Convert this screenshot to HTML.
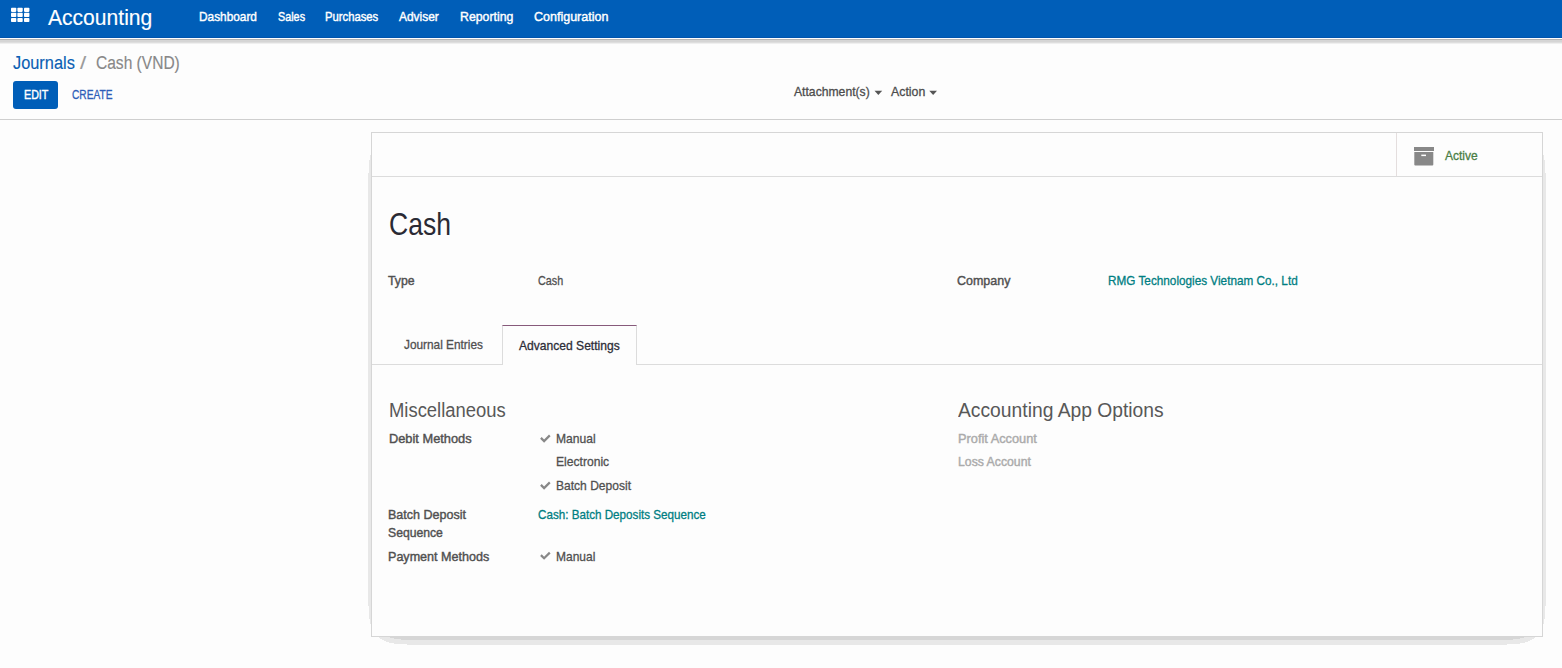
<!DOCTYPE html>
<html><head><meta charset="utf-8">
<style>
html,body{margin:0;padding:0;}
body{width:1562px;height:668px;position:relative;overflow:hidden;background:#fdfdfd;font-family:"Liberation Sans",sans-serif;}
.t{position:absolute;white-space:nowrap;transform-origin:0 0;}
.abs{position:absolute;}
</style></head><body>
<!-- navbar -->
<div class="abs" style="left:0;top:0;width:1562px;height:37px;background:#005eb8;"></div>
<div class="abs" style="left:0;top:37px;width:1562px;height:1px;background:#0054ad;"></div>
<div class="abs" style="left:0;top:38px;width:1562px;height:1px;background:#ffffff;"></div>
<div class="abs" style="left:0;top:39px;width:1562px;height:1px;background:#b5b5b5;"></div>
<div class="abs" style="left:0;top:40px;width:1562px;height:2px;background:#d5d5d5;"></div>
<div class="abs" style="left:0;top:42px;width:1562px;height:1px;background:#dedede;"></div>
<div class="abs" style="left:0;top:43px;width:1562px;height:1px;background:#efefef;"></div>
<!-- grid icon -->
<svg class="abs" style="left:0;top:0" width="40" height="37">
 <g fill="#fff">
  <rect x="11" y="7.7" width="5.3" height="4.2" rx="0.8"/><rect x="17.4" y="7.7" width="5.3" height="4.2" rx="0.8"/><rect x="24" y="7.7" width="5.4" height="4.2" rx="0.8"/>
  <rect x="11" y="12.8" width="5.3" height="4.2" rx="0.8"/><rect x="17.4" y="12.8" width="5.3" height="4.2" rx="0.8"/><rect x="24" y="12.8" width="5.4" height="4.2" rx="0.8"/>
  <rect x="11" y="17.9" width="5.3" height="4.2" rx="0.8"/><rect x="17.4" y="17.9" width="5.3" height="4.2" rx="0.8"/><rect x="24" y="17.9" width="5.4" height="4.2" rx="0.8"/>
 </g>
</svg>
<!-- edit button -->
<div class="abs" style="left:13px;top:81px;width:45px;height:28px;background:#005eb8;border-radius:3px;"></div>
<!-- carets -->
<svg class="abs" style="left:870px;top:86px" width="80" height="14">
 <polygon points="4.5,4.7 12.2,4.7 8.35,9" fill="#555"/>
 <polygon points="59.3,4.7 67,4.7 63.15,9" fill="#555"/>
</svg>
<!-- divider -->
<div class="abs" style="left:0;top:119px;width:1562px;height:1px;background:#cfcfcf;"></div>
<!-- sheet shadow -->
<svg class="abs" style="left:0;top:0" width="1562" height="668" shape-rendering="crispEdges"><rect x="370" y="155" width="1" height="5" fill="#e8e8e8"/><rect x="1543" y="155" width="1" height="5" fill="#e8e8e8"/><rect x="369" y="160" width="2" height="13" fill="#e8e8e8"/><rect x="1543" y="160" width="2" height="13" fill="#e8e8e8"/><rect x="368" y="173" width="3" height="433" fill="#e8e8e8"/><rect x="1543" y="173" width="3" height="433" fill="#e8e8e8"/><rect x="369" y="606" width="2" height="13" fill="#e8e8e8"/><rect x="1543" y="606" width="2" height="13" fill="#e8e8e8"/><rect x="370" y="619" width="1" height="5" fill="#e8e8e8"/><rect x="1543" y="619" width="1" height="5" fill="#e8e8e8"/><rect x="379" y="637" width="1156" height="1" fill="#e8e8e8"/><rect x="380" y="638" width="1154" height="1" fill="#e8e8e8"/><rect x="382" y="639" width="1150" height="1" fill="#e8e8e8"/><rect x="384" y="640" width="1146" height="1" fill="#e8e8e8"/><rect x="386" y="641" width="1142" height="1" fill="#e8e8e8"/><rect x="389" y="642" width="1136" height="1" fill="#e8e8e8"/><rect x="394" y="643" width="1126" height="1" fill="#e8e8e8"/><rect x="407" y="644" width="1100" height="1" fill="#e8e8e8"/><rect x="390" y="637" width="1134" height="1" fill="#d6d6d6"/><rect x="394" y="638" width="1126" height="1" fill="#d6d6d6"/><rect x="401" y="639" width="1112" height="1" fill="#d6d6d6"/></svg>
<!-- sheet -->
<div class="abs" style="left:371px;top:132px;width:1170px;height:503px;border:1px solid #d6d6d6;background:#fdfdfd;"></div>
<!-- button box -->
<div class="abs" style="left:372px;top:176px;width:1170px;height:1px;background:#dcdcdc;"></div>
<div class="abs" style="left:1396px;top:133px;width:1px;height:43px;background:#e4dede;"></div>
<!-- archive icon -->
<svg class="abs" style="left:1410px;top:144px" width="28" height="26">
 <rect x="4" y="3" width="20" height="4" fill="#888"/>
 <path d="M4.3 8 H23.3 V20.6 Q23.3 21.6 22.3 21.6 H5.3 Q4.3 21.6 4.3 20.6 Z" fill="#888"/>
 <rect x="11.3" y="10.6" width="4.7" height="1.5" fill="#fff"/>
</svg>
<!-- tabs -->
<div class="abs" style="left:372px;top:364px;width:1170px;height:1px;background:#dcdcdc;"></div>
<div class="abs" style="left:502px;top:325px;width:133px;height:39px;border:1px solid #dcdcdc;border-top-color:#875a7b;border-bottom:none;background:#fdfdfd;"></div>
<div class="abs" style="left:503px;top:364px;width:133px;height:1px;background:#fdfdfd;"></div>
<!-- checkmarks -->
<svg class="abs" style="left:536px;top:430px" width="20" height="140">
 <g fill="none" stroke="#888" stroke-width="2.2" stroke-linejoin="miter">
  <polyline points="4.9,7.9 8.1,11.1 13.8,5.4"/>
  <polyline points="4.9,54.9 8.1,58.1 13.8,52.4"/>
  <polyline points="4.9,125.1 8.1,128.3 13.8,122.6"/>
 </g>
</svg>
<div class="t" id="t0" style="left:47.67px;top:3.84px;font-size:21.8px;line-height:27px;transform:scaleX(0.9666);color:#ffffff;-webkit-text-stroke:0.15px #ffffff;">Accounting</div>
<div class="t" id="t1" style="left:198.59px;top:8.89px;font-size:13px;line-height:16px;transform:scaleX(0.9106);color:#ffffff;-webkit-text-stroke:0.42px #ffffff;">Dashboard</div>
<div class="t" id="t2" style="left:277.67px;top:8.89px;font-size:13px;line-height:16px;transform:scaleX(0.8315);color:#ffffff;-webkit-text-stroke:0.42px #ffffff;">Sales</div>
<div class="t" id="t3" style="left:325.38px;top:8.89px;font-size:13px;line-height:16px;transform:scaleX(0.8667);color:#ffffff;-webkit-text-stroke:0.42px #ffffff;">Purchases</div>
<div class="t" id="t4" style="left:399.49px;top:8.89px;font-size:13px;line-height:16px;transform:scaleX(0.9183);color:#ffffff;-webkit-text-stroke:0.42px #ffffff;">Adviser</div>
<div class="t" id="t5" style="left:459.90px;top:8.89px;font-size:13px;line-height:16px;transform:scaleX(0.9458);color:#ffffff;-webkit-text-stroke:0.42px #ffffff;">Reporting</div>
<div class="t" id="t6" style="left:534.20px;top:8.89px;font-size:13px;line-height:16px;transform:scaleX(0.9622);color:#ffffff;-webkit-text-stroke:0.42px #ffffff;">Configuration</div>
<div class="t" id="t7" style="left:13.27px;top:50.88px;font-size:18.8px;line-height:24px;transform:scaleX(0.8706);color:#0a5fb4;-webkit-text-stroke:0.15px #0a5fb4;">Journals</div>
<div class="t" id="t8" style="left:80.49px;top:50.88px;font-size:18.8px;line-height:24px;transform:scaleX(1.1821);color:#9a9a9a;-webkit-text-stroke:0.15px #9a9a9a;">/</div>
<div class="t" id="t9" style="left:96.06px;top:50.88px;font-size:18.8px;line-height:24px;transform:scaleX(0.8277);color:#888888;-webkit-text-stroke:0.15px #888888;">Cash (VND)</div>
<div class="t" id="t10" style="left:23.58px;top:87.17px;font-size:12.5px;line-height:16px;transform:scaleX(0.8550);color:#ffffff;-webkit-text-stroke:0.42px #ffffff;">EDIT</div>
<div class="t" id="t11" style="left:71.82px;top:87.17px;font-size:12.5px;line-height:16px;transform:scaleX(0.8127);color:#2d5db8;-webkit-text-stroke:0.3px #2d5db8;">CREATE</div>
<div class="t" id="t12" style="left:794.44px;top:84.09px;font-size:13px;line-height:16px;transform:scaleX(0.9357);color:#4c4c4c;-webkit-text-stroke:0.3px #4c4c4c;">Attachment(s)</div>
<div class="t" id="t13" style="left:891.24px;top:84.09px;font-size:13px;line-height:16px;transform:scaleX(0.9495);color:#4c4c4c;-webkit-text-stroke:0.3px #4c4c4c;">Action</div>
<div class="t" id="t14" style="left:1444.84px;top:147.69px;font-size:13px;line-height:16px;transform:scaleX(0.9246);color:#4a7d45;-webkit-text-stroke:0.3px #4a7d45;">Active</div>
<div class="t" id="t15" style="left:388.70px;top:204.78px;font-size:31.5px;line-height:39px;transform:scaleX(0.8429);color:#2a2a34;">Cash</div>
<div class="t" id="t16" style="left:388.10px;top:272.99px;font-size:13px;line-height:16px;transform:scaleX(0.9441);color:#505050;-webkit-text-stroke:0.42px #505050;">Type</div>
<div class="t" id="t17" style="left:538.22px;top:272.99px;font-size:13px;line-height:16px;transform:scaleX(0.8286);color:#505050;-webkit-text-stroke:0.3px #505050;">Cash</div>
<div class="t" id="t18" style="left:957.30px;top:272.99px;font-size:13px;line-height:16px;transform:scaleX(0.9597);color:#505050;-webkit-text-stroke:0.42px #505050;">Company</div>
<div class="t" id="t19" style="left:1107.54px;top:272.99px;font-size:13px;line-height:16px;transform:scaleX(0.9042);color:#007e82;-webkit-text-stroke:0.3px #007e82;">RMG Technologies Vietnam Co., Ltd</div>
<div class="t" id="t20" style="left:404.24px;top:336.99px;font-size:13px;line-height:16px;transform:scaleX(0.9102);color:#505050;-webkit-text-stroke:0.3px #505050;">Journal Entries</div>
<div class="t" id="t21" style="left:518.84px;top:337.99px;font-size:13px;line-height:16px;transform:scaleX(0.9290);color:#2d2d38;-webkit-text-stroke:0.3px #2d2d38;">Advanced Settings</div>
<div class="t" id="t22" style="left:389.00px;top:398.14px;font-size:19.5px;line-height:24px;transform:scaleX(0.9443);color:#585858;">Miscellaneous</div>
<div class="t" id="t23" style="left:388.91px;top:430.69px;font-size:13px;line-height:16px;transform:scaleX(0.9853);color:#505050;-webkit-text-stroke:0.42px #505050;">Debit Methods</div>
<div class="t" id="t24" style="left:556.24px;top:430.99px;font-size:13px;line-height:16px;transform:scaleX(0.9292);color:#505050;-webkit-text-stroke:0.3px #505050;">Manual</div>
<div class="t" id="t25" style="left:556.24px;top:453.69px;font-size:13px;line-height:16px;transform:scaleX(0.9308);color:#505050;-webkit-text-stroke:0.3px #505050;">Electronic</div>
<div class="t" id="t26" style="left:556.24px;top:477.99px;font-size:13px;line-height:16px;transform:scaleX(0.9271);color:#505050;-webkit-text-stroke:0.3px #505050;">Batch Deposit</div>
<div class="t" id="t27" style="left:388.20px;top:507.19px;font-size:13px;line-height:16px;transform:scaleX(0.9626);color:#505050;-webkit-text-stroke:0.42px #505050;">Batch Deposit</div>
<div class="t" id="t28" style="left:388.20px;top:525.39px;font-size:13px;line-height:16px;transform:scaleX(0.9375);color:#505050;-webkit-text-stroke:0.42px #505050;">Sequence</div>
<div class="t" id="t29" style="left:538.33px;top:507.19px;font-size:13px;line-height:16px;transform:scaleX(0.8962);color:#007e82;-webkit-text-stroke:0.3px #007e82;">Cash: Batch Deposits Sequence</div>
<div class="t" id="t30" style="left:388.20px;top:548.99px;font-size:13px;line-height:16px;transform:scaleX(0.9667);color:#505050;-webkit-text-stroke:0.42px #505050;">Payment Methods</div>
<div class="t" id="t31" style="left:556.24px;top:548.99px;font-size:13px;line-height:16px;transform:scaleX(0.9222);color:#505050;-webkit-text-stroke:0.3px #505050;">Manual</div>
<div class="t" id="t32" style="left:957.70px;top:398.04px;font-size:19.5px;line-height:24px;transform:scaleX(0.9882);color:#585858;">Accounting App Options</div>
<div class="t" id="t33" style="left:957.61px;top:430.89px;font-size:13px;line-height:16px;transform:scaleX(0.9835);color:#ababab;-webkit-text-stroke:0.42px #ababab;">Profit Account</div>
<div class="t" id="t34" style="left:957.60px;top:453.69px;font-size:13px;line-height:16px;transform:scaleX(0.9429);color:#ababab;-webkit-text-stroke:0.42px #ababab;">Loss Account</div>
</body></html>
